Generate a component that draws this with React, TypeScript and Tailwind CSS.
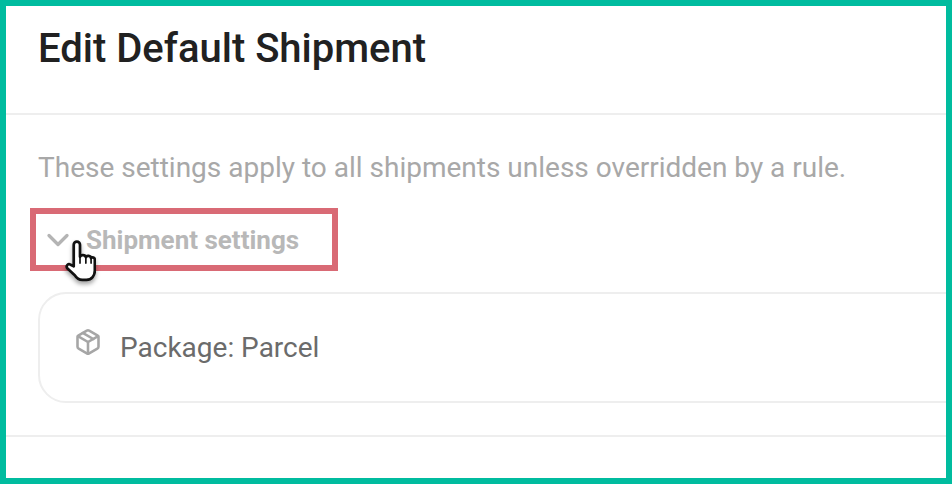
import { ChevronDown, Package } from "lucide-react";

function HandCursor() {
  return (
    <svg
      viewBox="0 0 30 44"
      className="absolute left-[64px] top-[238px] h-[46px] w-[32px] drop-shadow-[0_3px_2px_rgba(0,0,0,0.35)]"
    >
      <path
        d="M9 27V6.5a3 3 0 0 1 6 0V18c.6-2.2 5-2.2 5.6.4.8-2 4.6-1.6 5 .9.9-1.4 3.6-.8 3.6 1.6V31c0 5-3 9-8 9h-4c-3.6 0-5.4-1.6-7.2-4.4L2.8 29c-1.6-2.6 1-5 3.2-3.4z"
        fill="#fff"
        stroke="#111"
        strokeWidth="2.6"
        strokeLinejoin="round"
      />
      <path d="M15 18v6M20.6 18.6V24M25.6 19.6V24" stroke="#111" strokeWidth="1.6" strokeLinecap="round" />
    </svg>
  );
}

export default function App() {
  return (
    <div className="relative h-[484px] w-[952px] overflow-hidden border-[6px] border-[#00bc9f] bg-white font-['Roboto',sans-serif]">
      {/* header */}
      <div className="flex h-[109px] items-start border-b-2 border-[#eeeeee] pl-[32px] pt-[21px]">
        <h1 className="text-[40px] leading-[44px] font-medium text-[#212121]">Edit Default Shipment</h1>
      </div>

      <div className="border-b-2 border-[#eeeeee] pb-[32px] pl-[32px] pt-[37px]">
        <p className="text-[28px] leading-[32px] text-[#a8a8a8]">
          These settings apply to all shipments unless overridden by a rule.
        </p>

        <div className="mt-[38px] flex h-[36px] items-center">
          <ChevronDown className="ml-[2px] h-[36px] w-[36px] text-[#b4b4b4]" strokeWidth={2.2} />
          <span className="ml-[10px] text-[26px] leading-[32px] font-bold text-[#b8b8b8]">Shipment settings</span>
        </div>

        <div className="mt-[34px] -mr-[60px] flex h-[111px] items-start rounded-l-[28px] border-2 border-[#eeeeee] pl-[34px] pt-[34px]">
          <Package className="h-[28px] w-[28px] text-[#a6a6a6]" strokeWidth={2.2} />
          <span className="ml-[18px] mt-[2px] text-[28px] leading-[36px] text-[#6b6b6b]">Package: Parcel</span>
        </div>
      </div>

      {/* highlight and pointer over the row */}
      <div className="absolute left-[24px] top-[202px] h-[63px] w-[308px] border-[6px] border-[#d96a75]" />
      <div className="absolute -left-[6px] -top-[6px]">
        <HandCursor />
      </div>
    </div>
  );
}
